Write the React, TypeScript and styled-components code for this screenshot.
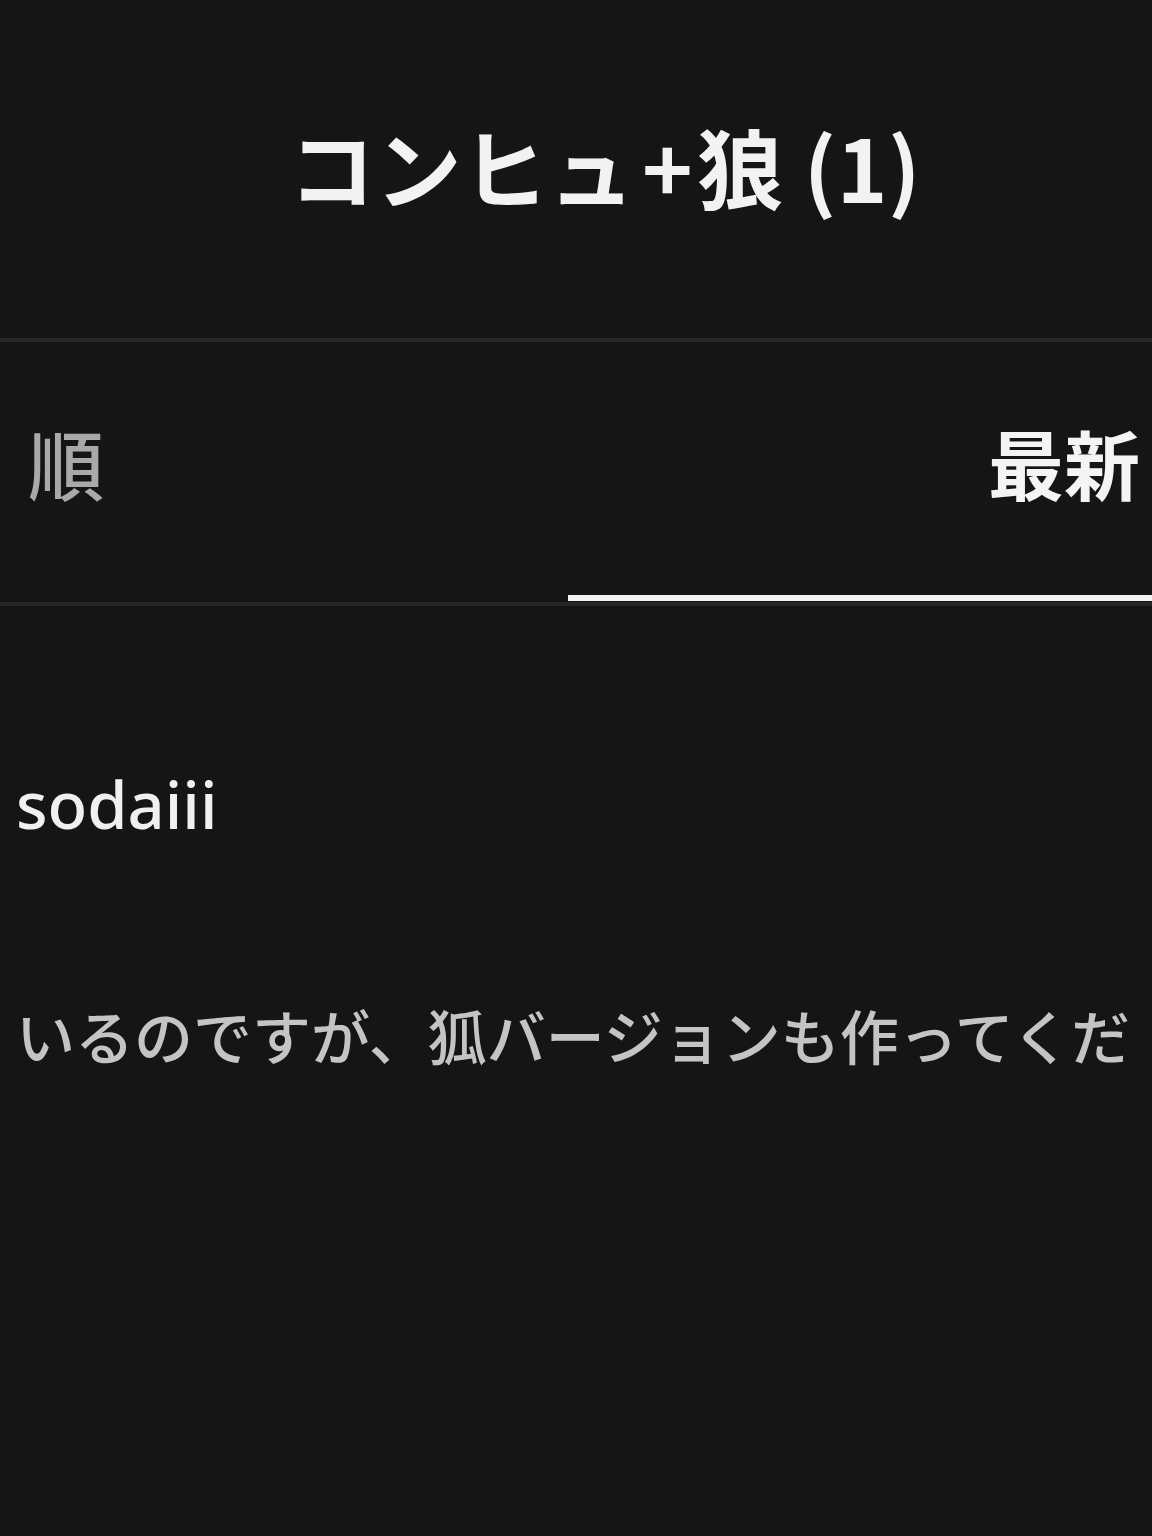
import React from "react";
import styled, { createGlobalStyle } from "styled-components";

const Global = createGlobalStyle`
  html, body { margin: 0; padding: 0; background: #151515; }
  body { font-family: "Noto Sans CJK JP", "Noto Sans", sans-serif; }
`;

const Page = styled.div`
  width: 1152px;
  height: 1536px;
  background: #151515;
  display: flex;
  flex-direction: column;
  overflow: hidden;
`;

const Header = styled.header`
  display: flex;
  align-items: center;
  justify-content: center;
  border-bottom: 4px solid #272727;
  box-sizing: border-box;
  height: 342px;
  padding-left: 58px;
`;

const Title = styled.h1`
  margin: 0;
  font-size: 86px;
  font-weight: 700;
  color: #f2f2f2;
  line-height: 1;
  padding-bottom: 6px;
  letter-spacing: 0.5px;
`;

const Plus = styled.span`
  margin: 0 4px 0 7px;
`;

const Tabs = styled.nav`
  height: 264px;
  display: grid;
  grid-template-columns: 568px 1fr;
  border-bottom: 4px solid #262626;
  box-sizing: border-box;
`;

const Tab = styled.div<{ $active?: boolean; $align: "left" | "right" }>`
  position: relative;
  display: flex;
  align-items: center;
  justify-content: ${(p) => (p.$align === "left" ? "flex-start" : "flex-end")};
  padding: 0 12px 20px 28px;
  font-size: 76px;
  font-weight: ${(p) => (p.$active ? 700 : 500)};
  color: ${(p) => (p.$active ? "#f4f4f4" : "#a9a9a9")};
  line-height: 1;
  &::after {
    content: "";
    display: ${(p) => (p.$active ? "block" : "none")};
    position: absolute;
    left: 0;
    right: 0;
    bottom: 1px;
    height: 6px;
    background: #f2f2f2;
  }
`;

const Comment = styled.article`
  display: flex;
  flex-direction: column;
  padding: 166px 16px 0;
`;

const User = styled.div`
  font-family: "Noto Sans", "Noto Sans CJK JP", sans-serif;
  font-size: 65px;
  font-weight: 500;
  color: #f0f0f0;
  line-height: 1;
`;

const Body = styled.p`
  margin: 168px 0 0;
  font-size: 59px;
  font-weight: 500;
  color: #c4c4c4;
  line-height: 1;
  white-space: nowrap;
`;

export default function App() {
  return (
    <>
      <Global />
      <Page>
        <Header>
          <Title>
            コンヒュ<Plus>+</Plus>狼 (1)
          </Title>
        </Header>
        <Tabs>
          <Tab $align="left">順</Tab>
          <Tab $align="right" $active>
            最新
          </Tab>
        </Tabs>
        <Comment>
          <User>sodaiii</User>
          <Body>いるのですが、狐バージョンも作ってくだ</Body>
        </Comment>
      </Page>
    </>
  );
}
